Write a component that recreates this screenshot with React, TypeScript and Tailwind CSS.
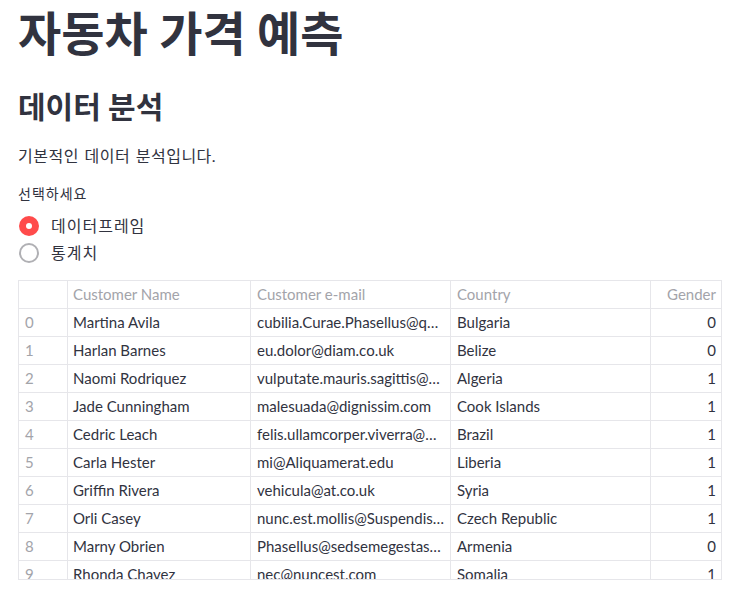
const rows = [
  ["Martina Avila", "cubilia.Curae.Phasellus@quisaccumsanconvallis.edu", "Bulgaria", "0"],
  ["Harlan Barnes", "eu.dolor@diam.co.uk", "Belize", "0"],
  ["Naomi Rodriquez", "vulputate.mauris.sagittis@ametconsectetueradipiscing.co.uk", "Algeria", "1"],
  ["Jade Cunningham", "malesuada@dignissim.com", "Cook Islands", "1"],
  ["Cedric Leach", "felis.ullamcorper.viverra@egetmollislectus.net", "Brazil", "1"],
  ["Carla Hester", "mi@Aliquamerat.edu", "Liberia", "1"],
  ["Griffin Rivera", "vehicula@at.co.uk", "Syria", "1"],
  ["Orli Casey", "nunc.est.mollis@Suspendissetristiqueneque.co.uk", "Czech Republic", "1"],
  ["Marny Obrien", "Phasellus@sedsemegestas.org", "Armenia", "0"],
  ["Rhonda Chavez", "nec@nuncest.com", "Somalia", "1"],
];

const font = "font-['Lato','Noto_Sans_CJK_KR',sans-serif]";
const cell = "h-[28px] truncate border-b border-[#e6e6ea] leading-[27px]";

export default function App() {
  return (
    <div className={`${font} min-h-[593px] w-[736px] bg-white px-[18px] text-[#31333F]`}>
      <h1 className="pt-[5px] text-[47px] font-bold leading-[1.2]">자동차 가격 예측</h1>
      <h2 className="mt-[27px] text-[30px] font-bold leading-[1.2]">데이터 분석</h2>
      <p className="mt-[19px] text-[16px] leading-[1.6] tracking-[0.5px] [word-spacing:1px]">기본적인 데이터 분석입니다.</p>

      <div className="mt-[15px] text-[14px] leading-[20px] tracking-[1px]">선택하세요</div>
      <div className="mt-[9px] flex flex-col">
        <label className="flex h-[27px] items-center gap-[12px] text-[16px] tracking-[1px]">
          <span className="ml-[1px] flex h-[20px] w-[20px] items-center justify-center rounded-full bg-[#FF4B4B]">
            <span className="h-[6px] w-[6px] rounded-full bg-white" />
          </span>
          데이터프레임
        </label>
        <label className="flex h-[27px] items-center gap-[12px] text-[16px] tracking-[1px]">
          <span className="ml-[1px] h-[20px] w-[20px] rounded-full border-2 border-[#b0b0b4]" />
          통계치
        </label>
      </div>

      <div className="mt-[13px] h-[300px] w-[704px] overflow-hidden border border-[#e6e6ea] text-[15px]">
        <div className="grid grid-cols-[49px_183px_200px_200px_70px]">
          <div className={`${cell} border-r`} />
          <div className={`${cell} border-r px-[5px] text-[#a3a4aa]`}>Customer Name</div>
          <div className={`${cell} border-r px-[6px] text-[#a3a4aa]`}>Customer e-mail</div>
          <div className={`${cell} border-r px-[6px] text-[#a3a4aa]`}>Country</div>
          <div className={`${cell} px-[5px] text-right text-[#a3a4aa]`}>Gender</div>
          {rows.map((r, i) => (
            <div key={i} className="contents">
              <div className={`${cell} border-r px-[6px] text-[#a3a4aa]`}>{i}</div>
              <div className={`${cell} border-r px-[5px]`}>{r[0]}</div>
              <div className={`${cell} border-r px-[6px]`}>{r[1]}</div>
              <div className={`${cell} border-r px-[6px]`}>{r[2]}</div>
              <div className={`${cell} px-[5px] text-right`}>{r[3]}</div>
            </div>
          ))}
        </div>
      </div>
    </div>
  );
}
